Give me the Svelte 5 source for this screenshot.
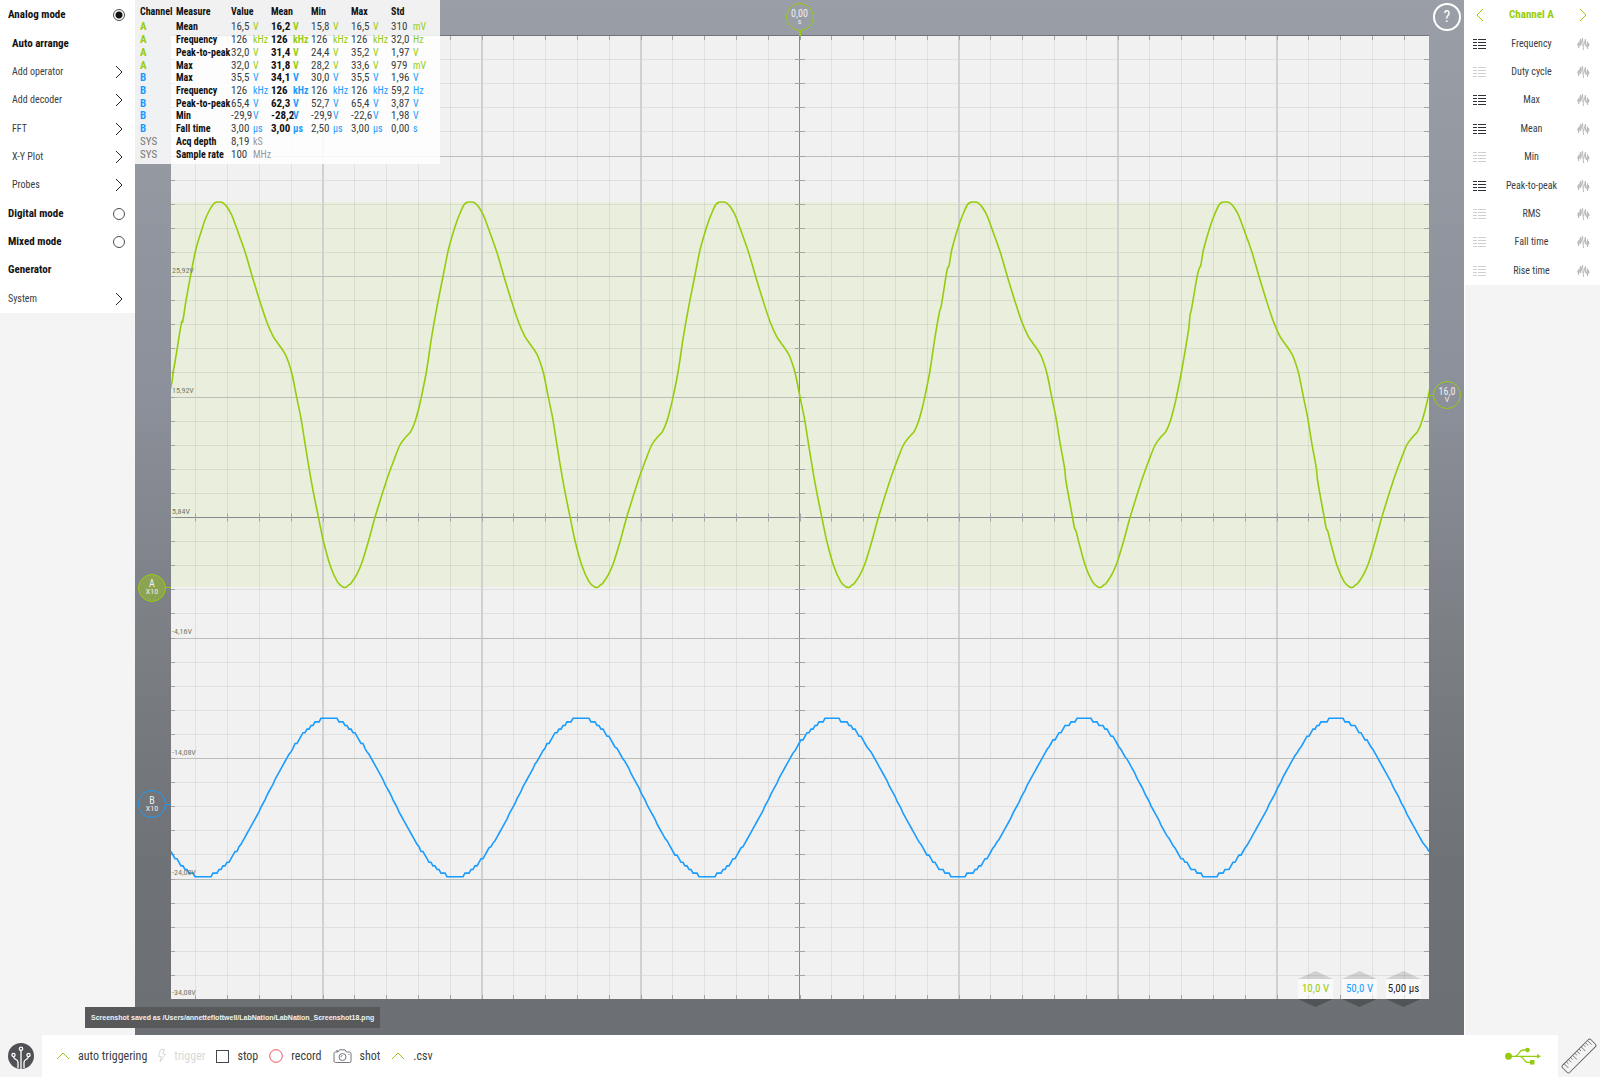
<script>
  const menu = [
    { label: 'Analog mode', kind: 'radio', bold: true },
    { label: 'Auto arrange', kind: 'plain', bold: true, sub: true },
    { label: 'Add operator', kind: 'more', sub: true },
    { label: 'Add decoder', kind: 'more', sub: true },
    { label: 'FFT', kind: 'more', sub: true },
    { label: 'X-Y Plot', kind: 'more', sub: true },
    { label: 'Probes', kind: 'more', sub: true },
    { label: 'Digital mode', kind: 'radio', bold: true },
    { label: 'Mixed mode', kind: 'radio', bold: true },
    { label: 'Generator', kind: 'plain', bold: true },
    { label: 'System', kind: 'more' }
  ];
  let mode = $state('Analog mode');

  const columns = ['Value', 'Mean', 'Min', 'Max', 'Std'];
  const rows = [
    ['A', 'Mean', [['16,5', 'V'], ['16,2', 'V'], ['15,8', 'V'], ['16,5', 'V'], ['310', 'mV']]],
    ['A', 'Frequency', [['126', 'kHz'], ['126', 'kHz'], ['126', 'kHz'], ['126', 'kHz'], ['32,0', 'Hz']]],
    ['A', 'Peak-to-peak', [['32,0', 'V'], ['31,4', 'V'], ['24,4', 'V'], ['35,2', 'V'], ['1,97', 'V']]],
    ['A', 'Max', [['32,0', 'V'], ['31,8', 'V'], ['28,2', 'V'], ['33,6', 'V'], ['979', 'mV']]],
    ['B', 'Max', [['35,5', 'V'], ['34,1', 'V'], ['30,0', 'V'], ['35,5', 'V'], ['1,96', 'V']]],
    ['B', 'Frequency', [['126', 'kHz'], ['126', 'kHz'], ['126', 'kHz'], ['126', 'kHz'], ['59,2', 'Hz']]],
    ['B', 'Peak-to-peak', [['65,4', 'V'], ['62,3', 'V'], ['52,7', 'V'], ['65,4', 'V'], ['3,87', 'V']]],
    ['B', 'Min', [['-29,9', 'V'], ['-28,2', 'V'], ['-29,9', 'V'], ['-22,6', 'V'], ['1,98', 'V']]],
    ['B', 'Fall time', [['3,00', 'µs'], ['3,00', 'µs'], ['2,50', 'µs'], ['3,00', 'µs'], ['0,00', 's']]],
    ['SYS', 'Acq depth', [['8,19', 'kS']]],
    ['SYS', 'Sample rate', [['100', 'MHz']]]
  ];

  const measures = [
    ['Frequency', true], ['Duty cycle', false], ['Max', true], ['Mean', true], ['Min', false],
    ['Peak-to-peak', true], ['RMS', false], ['Fall time', false], ['Rise time', false]
  ];

  const scales = [
    { value: '10,0 V', tone: 'green' },
    { value: '50,0 V', tone: 'blue' },
    { value: '5,00 µs', tone: 'dark' }
  ];

  // Plot space
  const W = 1258;
  const H = 963;
  const CX = 629;
  const CY = 481.5;
  const DX = 31.8;
  const DY = 24.1;
  const PERIOD = 251.7;

  const vertical = [];
  for (let k = -19; k <= 19; k++) vertical.push({ k, x: CX + k * DX });
  const horizontal = [];
  for (let k = -19; k <= 19; k++) horizontal.push({ k, y: CY + k * DY });

  const major = (k) => k % 5 === 0 && k !== 0;
  const snap = (v) => Math.floor(v) + 0.5;
  const lines = (list, fn) => list.map(fn).join('');
  const minorPath =
    lines(vertical.filter((v) => v.k % 5), (v) => `M${snap(v.x)} 0V${H}`) +
    lines(horizontal.filter((h) => h.k % 5), (h) => `M0 ${snap(h.y)}H${W}`);
  const majorV = lines(vertical.filter((v) => major(v.k)), (v) => `M${Math.round(v.x)} 0V${H}`);
  const majorH = lines(horizontal.filter((h) => major(h.k)), (h) => `M0 ${snap(h.y)}H${W}`);
  const centre = `M${CX - 0.5} 0V${H}M0 ${CY}H${W}`;
  const ticks =
    lines(vertical, (v) => `M${snap(v.x)} 0v4M${snap(v.x)} ${CY - 4}v8M${snap(v.x)} ${H}v-4`) +
    lines(horizontal, (h) => `M0 ${snap(h.y)}h4M${CX - 5} ${snap(h.y)}h10M${W} ${snap(h.y)}h-5`);

  const axis = ['25,92V', '15,92V', '5,84V', '-4,16V', '-14,08V', '-24,08V', '-34,08V'].map(
    (text, i) => ({ text, top: ((241 + i * 120.4) / H) * 100 })
  );

  // Channel A: one cycle after its peak, in thirds of a unit
  const fall = [
    [8, 67], [17, 73], [26, 84], [38, 105], [53, 145], [78, 215], [100, 290], [122, 362], [143, 425], [163, 470],
    [178, 492], [199, 523], [208, 545], [219, 582], [233, 652], [245, 710], [258, 790], [278, 910],
    [298, 1010], [313, 1082], [333, 1155], [355, 1205], [372, 1221], [381, 1222], [390, 1214], [395, 1211]
  ];
  const rise = [
    [413, 1184], [428, 1150], [448, 1085], [468, 1012], [503, 900], [523, 845], [543, 795], [563, 768],
    [575, 755], [588, 725], [598, 690], [607, 652], [623, 570], [638, 470], [653, 385], [673, 285],
    [688, 210], [708, 140], [723, 100], [736, 73], [745, 67]
  ];
  const lead = [
    [-145, 625], [-140, 600], [-138, 578], [-134, 558], [-127, 515], [-112, 425], [-109, 425], [-99, 362],
    [-84, 280], [-70, 210], [-52, 150], [-42, 120], [-30, 93], [-17, 73], [-9, 67]
  ];
  const notchRise = {
    2: [[638, 470], [652, 392], [656, 380], [669, 300], [675, 266], [680, 256]],
    3: [[644, 445], [648, 404], [651, 394], [669, 290], [675, 266], [680, 256]]
  };
  const notchFall = [[272, 868], [275, 900], [294, 1005], [301, 1043], [306, 1054]];

  function pointsA() {
    const out = [];
    const put = (cycle, pts) =>
      pts.forEach(([x, y]) => out.push([48 + cycle * PERIOD + x / 3, 144 + y / 3]));
    put(0, lead);
    for (let c = 0; c < 5; c++) {
      let f = fall;
      if (c >= 3) f = [...fall.filter((p) => p[0] < 270), ...notchFall, ...fall.filter((p) => p[0] > 308)];
      put(c, f);
      const n = notchRise[c];
      put(c, n ? [...rise.filter((p) => p[0] < 630), ...n, ...rise.filter((p) => p[0] > 682)] : rise);
    }
    return out.filter((p) => p[0] < W + 30);
  }

  // Cubic through all points, with tangents scaled to each segment's length
  function smooth(p) {
    const slope = p.map((q, i) => {
      const a = p[i - 1] ?? q;
      const c = p[i + 1] ?? q;
      return (c[1] - a[1]) / (c[0] - a[0]);
    });
    let d = `M${p[0][0]} ${p[0][1]}`;
    for (let i = 0; i < p.length - 1; i++) {
      const b = p[i];
      const c = p[i + 1];
      const h = (c[0] - b[0]) / 3;
      d += `C${(b[0] + h).toFixed(1)} ${(b[1] + h * slope[i]).toFixed(1)} ${(c[0] - h).toFixed(1)} ${(c[1] - h * slope[i + 1]).toFixed(1)} ${c[0].toFixed(1)} ${c[1].toFixed(1)}`;
    }
    return d;
  }
  const traceA = smooth(pointsA());

  // Channel B: sine whose flat parts show the converter's step
  let traceB = '';
  for (let x = 0; x <= W; x += 2) {
    const y = 22 * Math.cos((2 * Math.PI * (x - 158)) / PERIOD);
    const q = Math.abs(y) > 14 ? Math.round(y) : Math.round(y * 3) / 3;
    traceB += `${x ? 'L' : 'M'}${x} ${(761.5 - q * 3.6).toFixed(1)}`;
  }
</script>

{#snippet chevron(d, cls)}
  <svg class="chev {cls}" viewBox="0 0 14 14" aria-hidden="true"><path {d} /></svg>
{/snippet}

<div class="app">
  <div class="main">
    <nav class="side left">
      <ul class="menu">
        {#each menu as item}
          <li class:bold={item.bold} class:sub={item.sub}>
            {#if item.kind === 'radio'}
              <label>{item.label}<input type="radio" name="mode" value={item.label} bind:group={mode} /></label>
            {:else}
              <button>
                {item.label}
                {#if item.kind === 'more'}{@render chevron('M4 1L10 7L4 13', 'black')}{/if}
              </button>
            {/if}
          </li>
        {/each}
      </ul>
    </nav>

    <main class="scope">
      <div class="plot">
        <svg class="graph" viewBox="0 0 {W} {H}" preserveAspectRatio="none" role="img" aria-label="Oscilloscope traces">
          <rect class="band" x="0" y="166" width={W} height="385" />
          <path class="minor" d={minorPath} />
          <path class="major-v" d={majorV} />
          <path class="major-h" d={majorH} />
          <path class="centre" d={centre} />
          <path class="ticks" d={ticks} />
          <path class="trace a" d={traceA} />
          <path class="trace b" d={traceB} />
        </svg>
        {#each axis as a}
          <span class="axis" style="top: {a.top}%">{a.text}</span>
        {/each}
        <button class="knob time" style="left: {(628.5 / W) * 100}%"><b>0,00</b><i>s</i></button>
        <button class="knob chan a" style="top: {(551.5 / H) * 100}%"><b>A</b><i>X10</i></button>
        <button class="knob chan b" style="top: {(768 / H) * 100}%"><b>B</b><i>X10</i></button>
        <button class="knob level" style="top: {(359 / H) * 100}%"><b>16,0</b><i>V</i></button>
      </div>

      <section class="readout">
        <table>
          <colgroup>
            <col class="c-ch" /><col class="c-name" />
            {#each columns as _}<col class="c-val" /><col class="c-unit" />{/each}
          </colgroup>
          <thead>
            <tr>
              <th>Channel</th><th>Measure</th>
              {#each columns as c}<th colspan="2">{c}</th>{/each}
            </tr>
          </thead>
          <tbody>
            {#each rows as [ch, name, cells]}
              <tr class={ch}>
                <td class="ch">{ch}</td>
                <td class="name">{name}</td>
                {#each cells as [v, u], i}
                  <td class:strong={i === 1}>{v}</td>
                  <td class="unit" class:strong={i === 1}>{u}</td>
                {/each}
              </tr>
            {/each}
          </tbody>
        </table>
      </section>

      <button class="help" aria-label="Help">?</button>

      <div class="scales">
        {#each scales as s}
          <div class="scale">
            <button class="up" aria-label="Increase {s.value}"></button>
            <span class={s.tone}>{s.value}</span>
            <button class="down" aria-label="Decrease {s.value}"></button>
          </div>
        {/each}
      </div>
    </main>

    <aside class="side right">
      <ul class="menu">
        <li class="head">
          <button aria-label="Previous channel">{@render chevron('M10 1L4 7L10 13', 'lime')}</button>
          <span>Channel A</span>
          <button aria-label="Next channel">{@render chevron('M4 1L10 7L4 13', 'lime')}</button>
        </li>
        {#each measures as [name, on]}
          <li class="measure">
            <button aria-label="Show {name} in table">
              <svg class="list" class:on viewBox="0 0 13 12" aria-hidden="true">
                <path d="M0 1.500H4M5 1.500H13M0 4.500H4M5 4.500H13M0 7.500H4M5 7.500H13M0 10.500H4M5 10.500H13" />
              </svg>
            </button>
            <span>{name}</span>
            <button aria-label="Plot {name}">
              <svg class="wave" viewBox="0 0 13 14" aria-hidden="true">
                <path d="M.5 8.500L1.500 5.500V11L3.500 2V9L5.500 1L6.500 13M6.500 9L8.500 2V8L9.500 10L10.500 4.500V12L11.500 6V9L13 7.500" />
              </svg>
            </button>
          </li>
        {/each}
      </ul>
    </aside>
  </div>

  <footer class="bar">
    <button class="brand" aria-label="Main menu">
      <svg viewBox="0 0 26 26" aria-hidden="true">
        <circle cx="13" cy="13" r="13" fill="#4f5154" />
        <g fill="none" stroke="#fff" stroke-width="1.300">
          <path d="M13 7.500V26M10 25V19.500Q10 17.500 8 16.500Q5.800 15.500 5.500 13.500M16 25V19.500Q16 17.500 18 16.500Q20.200 15.500 20.500 13.500" />
          <circle cx="13" cy="5.800" r="1.700" />
          <circle cx="5.500" cy="12" r="1.600" />
          <circle cx="20.500" cy="12" r="1.600" />
        </g>
      </svg>
    </button>
    <div class="tools">
      <button class="tool">{@render chevron('M1 10L7 4L13 10', 'lime')}auto triggering</button>
      <button class="tool t-trig" disabled>
        <svg width="8" height="14" viewBox="0 0 8 14" aria-hidden="true"><path d="M2.500 .5H6.500L4.800 5H7.500L2 13L3.300 7.500H.7Z" /></svg>trigger
      </button>
      <button class="tool">
        <svg width="13" height="13" viewBox="0 0 13 13" aria-hidden="true"><rect x=".5" y=".5" width="12" height="12" /></svg>stop
      </button>
      <button class="tool t-rec">
        <svg width="14" height="14" viewBox="0 0 14 14" aria-hidden="true"><circle cx="7" cy="7" r="6.300" /></svg>record
      </button>
      <button class="tool t-shot">
        <svg width="19" height="15" viewBox="0 0 19 15" aria-hidden="true">
          <path d="M2.500 3H5L6.500 .8H12L13.500 3H16.500Q18 3 18 4.500V12Q18 13.500 16.500 13.500H2.500Q1 13.500 1 12V4.500Q1 3 2.500 3Z" />
          <circle cx="9.500" cy="8" r="3.500" /><path d="M3 1.800H5M15.500 5.500H16.500M8 8A1.500 1.500 0 0 1 9.500 6.500" />
        </svg>shot
      </button>
      <button class="tool">{@render chevron('M1 10L7 4L13 10', 'lime')}.csv</button>
      <svg class="usb" viewBox="0 0 36 19" aria-label="USB connected" role="img">
        <g fill="#96cc0e"><circle cx="3.500" cy="9.300" r="3.500" /><circle cx="22.500" cy="3" r="2.300" /><rect x="25" y="13" width="4.500" height="4.500" /><path d="M32 7L36 9.300L32 11.600Z" /></g>
        <path d="M3 9.300H33M10 9.300Q12 9 14 6Q16 3 18 3H22M15 9.300Q17 9.500 19 12.500Q20.500 15.300 22.500 15.300H26" fill="none" stroke="#96cc0e" stroke-width="1.300" />
      </svg>
    </div>
    <button class="ruler" aria-label="Measure">
      <svg viewBox="0 0 36 36" aria-hidden="true">
        <g transform="rotate(-45 18 18)" fill="none" stroke="#63666a">
          <rect x="-2" y="13" width="40" height="10" rx="2" />
          <path d="M2 13V19M5 13V16M8 13V17M11 13V16M14 13V19M17 13V16M20 13V17M23 13V16M26 13V19M29 13V16M32 13V17M35 13V19" stroke-width=".8" />
        </g>
      </svg>
    </button>
    <output class="toast">Screenshot saved as /Users/annetteflottwell/LabNation/LabNation_Screenshot18.png</output>
  </footer>
</div>

<style>
  :global(body) {
    margin: 0;
  }
  .app {
    --lime: #96cc0e;
    --sky: #1a9cff;
    display: flex;
    flex-direction: column;
    min-height: 100vh;
    background: #f4f4f4;
    color: #3a3d42;
    font: 10px/12px 'Liberation Sans Narrow', 'Roboto Condensed', 'Roboto', sans-serif;
  }
  button {
    border: 0;
    padding: 0;
    margin: 0;
    background: none;
    color: inherit;
    font: inherit;
    cursor: pointer;
  }
  .main {
    flex: 1;
    display: flex;
  }
  .side {
    flex: none;
    width: 135px;
  }
  .menu {
    display: grid;
    grid-auto-rows: 1fr;
    list-style: none;
    margin: 0;
    padding: 1px 0 0;
    background: #fff;
  }
  .left .menu {
    height: 312px;
  }
  .right .menu {
    height: 284px;
  }
  .menu li {
    display: flex;
    align-items: center;
  }
  .left label,
  .left li button {
    flex: 1;
    display: flex;
    align-items: center;
    justify-content: space-between;
    padding: 0 9px 0 8px;
    text-align: left;
  }
  .left .sub button {
    padding-left: 12px;
  }
  .bold {
    font-size: 11px;
    font-weight: 700;
    color: #111;
  }
  input[type='radio'] {
    appearance: none;
    box-sizing: border-box;
    width: 12px;
    height: 12px;
    margin: 0 1px 0 0;
    border: 1px solid #4a4d52;
    border-radius: 50%;
  }
  input[type='radio']:checked {
    background: radial-gradient(circle, #111 0 3px, transparent 4px);
  }
  .chev {
    width: 14px;
    height: 14px;
    fill: none;
    stroke-width: 1;
  }
  .black {
    stroke: #222;
  }
  .lime {
    stroke: var(--lime);
  }
  .right {
    border-left: 1px solid #fff;
  }
  .right li {
    justify-content: space-between;
    padding: 0 10px 0 8px;
  }
  .right li button {
    display: flex;
  }
  .head {
    color: var(--lime);
    font-size: 11px;
    font-weight: 700;
  }
  .list {
    width: 13px;
    height: 12px;
    stroke: #d0d0d0;
  }
  .list.on {
    stroke: #2c2f33;
  }
  .wave {
    width: 13px;
    height: 14px;
    fill: none;
    stroke: #bbb;
  }
  .scope {
    position: relative;
    flex: 1;
    display: grid;
    padding: 36px 35px 36px 36px;
    background: linear-gradient(#9a9ea6, #8c909a 38%, #7b7e83 62%, #6f7277 82%, #6c7075);
  }
  .plot {
    position: relative;
    background: #f1f1f1;
    box-shadow: 0 -1px #72757a;
  }
  .graph {
    position: absolute;
    width: 100%;
    height: 100%;
  }
  .graph path {
    fill: none;
  }
  .band {
    fill: #eaeedc;
  }
  .minor {
    stroke: rgba(0, 0, 0, 0.07);
  }
  .major-v {
    stroke: #d0d0d0;
    stroke-width: 2px;
  }
  .major-h {
    stroke: #bcbeba;
  }
  .centre {
    stroke: #85888c;
  }
  .ticks {
    stroke: #a4a6a6;
  }
  .graph .trace {
    stroke-width: 1.6px;
  }
  .trace.a {
    stroke: var(--lime);
  }
  .trace.b {
    stroke: var(--sky);
  }
  .axis {
    position: absolute;
    left: 1px;
    margin-top: -12px;
    font-size: 8px;
    color: #727a62;
  }
  .knob {
    position: absolute;
    box-sizing: border-box;
    width: 28px;
    height: 28px;
    border: 1px solid var(--lime);
    border-radius: 50%;
    display: flex;
    flex-direction: column;
    align-items: center;
    justify-content: center;
    color: #eee;
    font-size: 10px;
    line-height: 9px;
  }
  .knob b,
  .knob i {
    font-weight: 400;
    font-style: normal;
  }
  .knob i {
    font-size: 8px;
    line-height: 8px;
  }
  .knob::after {
    content: '';
    position: absolute;
    background: var(--lime);
  }
  .time {
    top: -33px;
    margin-left: -14px;
  }
  .time::after {
    top: 27px;
    width: 2px;
    height: 5px;
  }
  .chan,
  .level {
    margin-top: -14px;
  }
  .chan {
    left: -33px;
  }
  .chan::after {
    left: 27px;
    width: 5px;
    height: 1px;
  }
  .chan.a {
    background: #8ba352;
  }
  .chan.b {
    border-color: var(--sky);
  }
  .chan.b::after {
    background: var(--sky);
  }
  .level {
    right: -32px;
  }
  .level::after {
    right: 27px;
    width: 5px;
    height: 1px;
  }
  .readout {
    position: absolute;
    top: 0;
    left: 0;
    box-sizing: border-box;
    width: 305px;
    height: 164px;
    padding: 2px 0 0 5px;
    background: rgba(255, 255, 255, 0.86);
  }
  table {
    table-layout: fixed;
    width: 291px;
    height: 159px;
    border-collapse: collapse;
    white-space: nowrap;
  }
  .c-ch {
    width: 36px;
  }
  .c-name {
    width: 55px;
  }
  .c-val {
    width: 22px;
  }
  .c-unit {
    width: 18px;
  }
  th,
  td {
    padding: 0;
    text-align: left;
  }
  td {
    font-size: 11px;
  }
  td.name,
  td.unit {
    font-size: 10px;
  }
  thead tr {
    height: 19px;
  }
  th,
  .name,
  .strong {
    font-weight: 700;
    color: #111;
  }
  .ch {
    font-weight: 700;
  }
  .A .ch,
  .A .unit {
    color: var(--lime);
  }
  .B .ch,
  .B .unit {
    color: var(--sky);
  }
  .SYS .ch {
    font-weight: 400;
    color: #777;
  }
  .SYS .unit {
    color: #999;
  }
  .help {
    position: absolute;
    top: 3px;
    right: 3px;
    width: 28px;
    height: 28px;
    border: 2px solid #fff;
    border-radius: 50%;
    color: #fff;
    font-size: 16px;
  }
  .scales {
    position: absolute;
    right: 43px;
    bottom: 28px;
    display: flex;
    gap: 9px;
    font-size: 11px;
  }
  .scale {
    display: flex;
    flex-direction: column;
    width: 35px;
    text-align: center;
  }
  .scale span {
    background: rgba(255, 255, 255, 0.6);
    line-height: 20px;
  }
  .up,
  .down {
    height: 8px;
    background: rgba(0, 0, 0, 0.13);
    clip-path: polygon(50% 0, 100% 100%, 0 100%);
  }
  .down {
    background: rgba(0, 0, 0, 0.25);
    clip-path: polygon(0 0, 100% 0, 50% 100%);
  }
  .green {
    color: var(--lime);
  }
  .blue {
    color: var(--sky);
  }
  .dark {
    color: #222;
  }
  .bar {
    position: relative;
    display: flex;
    height: 42px;
  }
  .brand,
  .ruler {
    flex: none;
    width: 42px;
    display: grid;
    place-items: center;
  }
  .brand svg {
    width: 26px;
    height: 26px;
  }
  .ruler svg {
    width: 36px;
    height: 36px;
  }
  .tools {
    flex: 1;
    display: flex;
    align-items: center;
    gap: 11px;
    padding: 0 17px 0 14px;
    background: #fff;
    font-size: 12px;
  }
  .tool {
    display: flex;
    align-items: center;
    gap: 8px;
  }
  .tool svg {
    fill: none;
    stroke: #44474b;
  }
  .tool .lime {
    stroke: var(--lime);
  }
  .t-trig,
  .t-trig svg {
    color: #d8d8d8;
    stroke: #d8d8d8;
  }
  .t-rec svg {
    stroke: #f0545a;
  }
  .t-shot svg {
    stroke: #74777b;
  }
  .usb {
    width: 36px;
    height: 19px;
    margin-left: auto;
  }
  .toast {
    position: absolute;
    left: 85px;
    bottom: 49px;
    padding: 0 6px;
    background: #58595b;
    color: #f2f2f2;
    font: 700 7px/21px 'Liberation Sans', sans-serif;
    white-space: nowrap;
  }
</style>
